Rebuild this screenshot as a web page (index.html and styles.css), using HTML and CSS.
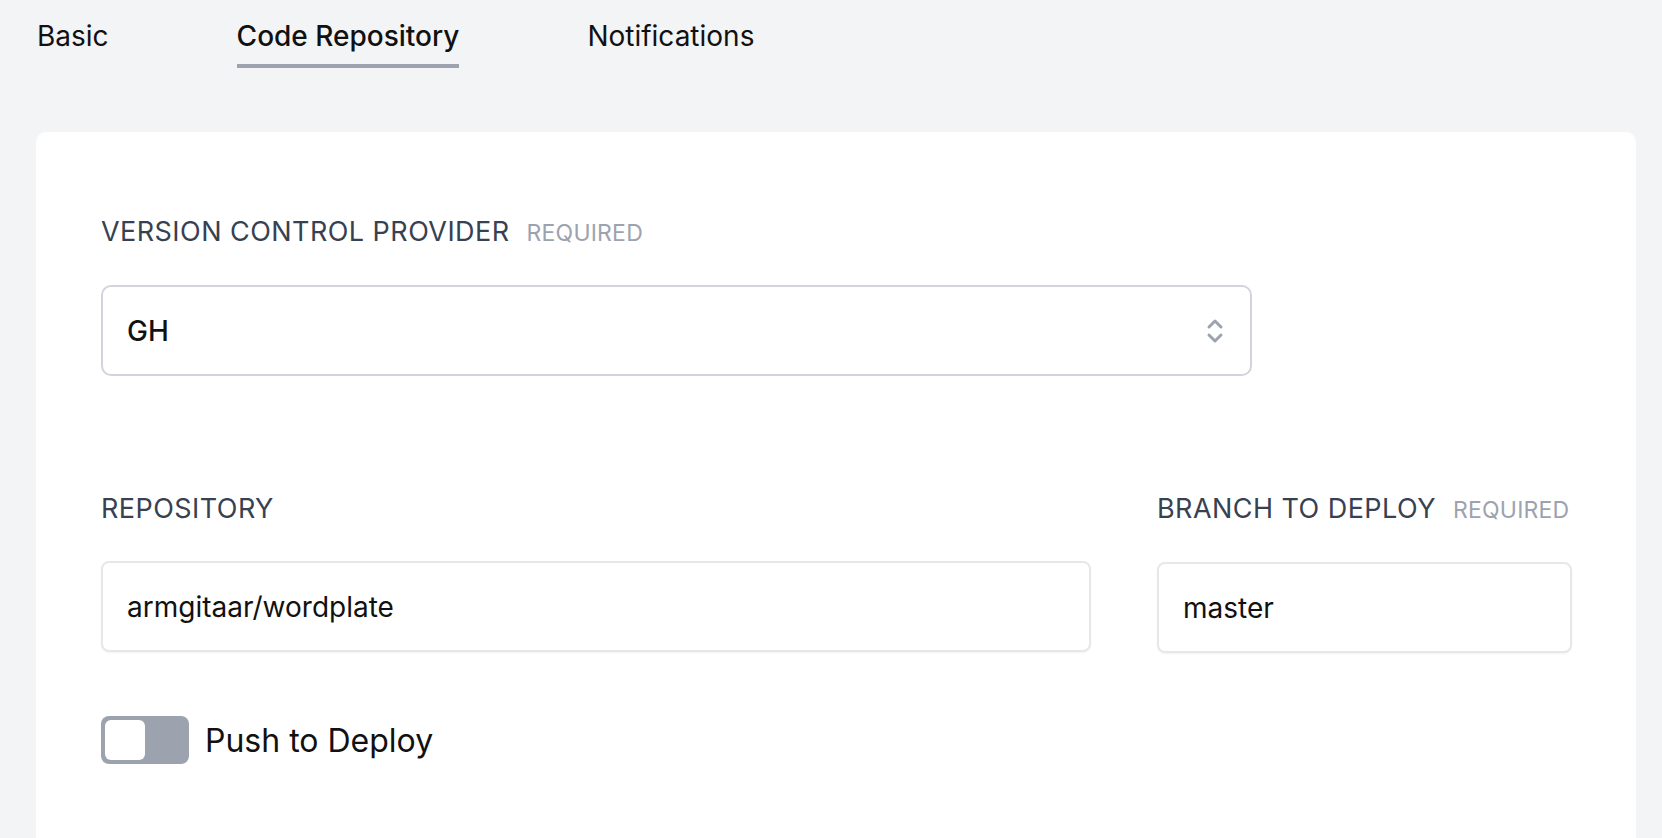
FILE: index.html
```html
<!DOCTYPE html>
<html>
<head>
<meta charset="utf-8">
<link rel="stylesheet" href="styles.css">
</head>
<body>
<nav class="tabs">
  <a class="tab">Basic</a>
  <a class="tab active">Code Repository</a>
  <a class="tab">Notifications</a>
</nav>
<main class="card">
  <div class="field provider">
    <label class="label">VERSION CONTROL PROVIDER <span class="req">REQUIRED</span></label>
    <div class="select">
      <span class="value">GH</span>
      <svg class="chev" width="18" height="28" viewBox="0 0 18 28" fill="none" stroke="#9ca3af" stroke-width="3" stroke-linecap="round" stroke-linejoin="round">
        <path d="M3 10 L9 4 L15 10"/>
        <path d="M3 18 L9 24 L15 18"/>
      </svg>
    </div>
  </div>
  <div class="row">
    <div class="field repo">
      <label class="label">REPOSITORY</label>
      <div class="input">armgitaar/wordplate</div>
    </div>
    <div class="field branch">
      <label class="label">BRANCH TO DEPLOY <span class="req">REQUIRED</span></label>
      <div class="input">master</div>
    </div>
  </div>
  <div class="toggle-row">
    <span class="toggle"><span class="knob"></span></span>
    <span class="toggle-label">Push to Deploy</span>
  </div>
</main>
</body>
</html>
```

FILE: styles.css
```css
html, body {
  margin: 0;
  padding: 0;
  background: #f3f4f6;
  font-family: Inter, "Noto Sans", sans-serif;
  color: #111;
  height: 100%;
  overflow: hidden;
}
.tabs {
  display: flex;
  gap: 128px;
  padding: 18px 0 0 37px;
  height: 50px;
}
.tab {
  font-size: 28px;
  font-weight: 400;
  line-height: 36px;
  color: #111;
  height: 50px;
  box-sizing: border-box;
}
.tab.active {
  font-weight: 500;
  border-bottom: 4px solid #9ca3af;
}
.card {
  margin: 64px 26px 0 36px;
  background: #fff;
  border-radius: 10px 10px 0 0;
  padding: 85px 64px 0 65px;
  height: 720px;
  box-sizing: border-box;
}
.label {
  display: block;
  font-size: 27px;
  letter-spacing: 0.45px;
  color: #374151;
  line-height: 30px;
  margin-bottom: 37px;
}
.req {
  font-size: 23px;
  letter-spacing: 0.2px;
  color: #9ca3af;
  margin-left: 9px;
}
.select {
  width: 1151px;
  height: 91px;
  box-sizing: border-box;
  border: 2px solid #d1d5db;
  border-radius: 10px;
  display: flex;
  align-items: center;
  justify-content: space-between;
  padding: 0 26px 0 24px;
}
.value {
  font-size: 28px;
  font-weight: 500;
}
.row {
  display: flex;
  gap: 66px;
  margin-top: 118px;
}
.repo { width: 990px; }
.branch { width: 415px; }
.input {
  height: 91px;
  box-sizing: border-box;
  border: 2px solid #e5e7eb;
  border-radius: 8px;
  box-shadow: 0 1px 2px rgba(0,0,0,0.05);
  display: flex;
  align-items: center;
  padding: 0 24px;
  font-size: 28px;
}
.toggle-row {
  display: flex;
  align-items: center;
  gap: 16px;
  margin-top: 63px;
}
.toggle {
  width: 88px;
  height: 48px;
  background: #9ca3af;
  border-radius: 8px;
  padding: 4px;
  box-sizing: border-box;
  display: flex;
}
.knob {
  width: 40px;
  height: 40px;
  background: #fff;
  border-radius: 6px;
}
.toggle-label {
  font-size: 32px;
}
```
